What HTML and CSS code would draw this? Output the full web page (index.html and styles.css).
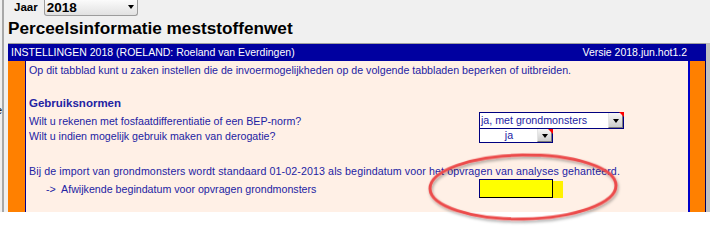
FILE: index.html
```html
<!DOCTYPE html>
<html lang="nl">
<head>
<meta charset="utf-8">
<title>Perceelsinformatie meststoffenwet</title>
<link rel="stylesheet" href="styles.css">
</head>
<body>
<div class="window">
  <div class="gutter"><span class="clip-e">e</span></div>
  <div class="main">
    <div class="toolbar">
      <div class="year-row">
        <span class="year-label">Jaar</span>
        <div class="year-select"><span class="year-value">2018</span><span class="caret"></span></div>
      </div>
      <h1 class="title">Perceelsinformatie meststoffenwet</h1>
    </div>
    <div class="frame">
      <div class="panel">
        <div class="panel-head">
          <span>INSTELLINGEN 2018 (ROELAND: Roeland van Everdingen)</span>
          <span>Versie 2018.jun.hot1.2</span>
        </div>
        <div class="panel-body">
          <div class="stripe-left"></div>
          <div class="sheet">
            <div class="cell span">Op dit tabblad kunt u zaken instellen die de invoermogelijkheden op de volgende tabbladen beperken of uitbreiden.</div>
            <div class="cell span"></div>
            <div class="cell span heading">Gebruiksnormen</div>
            <div class="cell">Wilt u rekenen met fosfaatdifferentiatie of een BEP-norm?</div>
            <div class="cell ctl">
              <div class="dropdown dd-wide"><span class="dd-value">ja, met grondmonsters</span><span class="dd-btn"></span><span class="note-mark"></span></div>
            </div>
            <div class="cell">Wilt u indien mogelijk gebruik maken van derogatie?</div>
            <div class="cell ctl">
              <div class="dropdown dd-narrow"><span class="dd-value">ja</span><span class="dd-btn"></span><span class="note-mark"></span></div>
            </div>
            <div class="cell span"></div>
            <div class="cell span wide-text">Bij de import van grondmonsters wordt standaard 01-02-2013 als begindatum voor het opvragen van analyses gehanteerd.</div>
            <div class="cell indent">->  Afwijkende begindatum voor opvragen grondmonsters</div>
            <div class="cell ctl ctl-field">
              <div class="field-ghost"></div>
              <div class="field"></div>
            </div>
            <div class="cell span"></div>
          </div>
          <div class="stripe-right"></div>
        </div>
      </div>
      <div class="scrollbar"></div>
    </div>
  </div>
</div>
<svg class="annotation" width="210" height="80" viewBox="0 0 210 80">
  <defs>
    <filter id="sh" x="-10%" y="-30%" width="120%" height="160%">
      <feDropShadow dx="1" dy="2" stdDeviation="1.6" flood-color="#000" flood-opacity="0.35"/>
    </filter>
  </defs>
  <ellipse cx="103" cy="42" rx="93" ry="32" fill="none" stroke="#ec4b4b" stroke-width="3" filter="url(#sh)" transform="rotate(-1 103 42)"/>
</svg>
</body>
</html>
```

FILE: styles.css
```css
body {
  margin: 0;
  background: #ffffff;
  font-family: "Liberation Sans", Arial, sans-serif;
}

.window {
  display: flex;
  width: 710px;
  height: 212px;
  background: #f0f0f0;
}

.gutter {
  width: 8px;
  flex: none;
  overflow: hidden;
  background: linear-gradient(to right, transparent 2px, #a8a8a8 2px, #a8a8a8 4px, transparent 4px);
}

.clip-e {
  display: block;
  margin: 104px 0 0 -4px;
  font-size: 11px;
  line-height: 12px;
  color: #000;
}

.main {
  width: 702px;
  display: flex;
  flex-direction: column;
}

.toolbar {
  height: 43px;
  flex: none;
}

.year-row {
  display: flex;
  align-items: flex-start;
  gap: 6px;
  padding-left: 6px;
  height: 16px;
}

.year-label {
  font-weight: bold;
  font-size: 11.5px;
  line-height: 14px;
  color: #000;
}

.year-select {
  width: 94px;
  height: 16px;
  box-sizing: border-box;
  border: 1px solid #9c9c9c;
  border-top: none;
  border-radius: 0 0 3px 3px;
  background: linear-gradient(#fbfbfb, #e1e1e1);
  display: flex;
  align-items: flex-start;
  padding-left: 2px;
}

.year-value {
  font-weight: bold;
  font-size: 13.5px;
  line-height: 15px;
  color: #000;
}

.caret {
  margin: 5px 3px 0 auto;
  width: 0;
  height: 0;
  border-left: 3.5px solid transparent;
  border-right: 3.5px solid transparent;
  border-top: 4px solid #000;
}

.title {
  margin: 0 0 3px;
  height: 24px;
  font-size: 17.2px;
  font-weight: bold;
  line-height: 24px;
  color: #000;
  white-space: nowrap;
}

.frame {
  display: flex;
  flex: 1;
}

.panel {
  width: 698px;
  display: flex;
  flex-direction: column;
}

.panel-head {
  height: 17px;
  border-top: 1px solid #a0a0a0;
  background: #0000a0;
  color: #ffffff;
  font-size: 10.5px;
  line-height: 17px;
  display: flex;
  justify-content: space-between;
  padding: 0 19px 0 3px;
  white-space: nowrap;
}

.panel-body {
  flex: 1;
  display: flex;
}

.stripe-left {
  width: 17px;
  background: #ff8000;
  border-right: 1px solid #000090;
}

.stripe-right {
  width: 15px;
  background: #ff8000;
  border-left: 2px solid #0000c8;
  border-right: 1px solid #000060;
}

.scrollbar {
  width: 4px;
  background: #c0c0c0;
}

.sheet {
  width: 662px;
  background: #fff0e6;
  display: grid;
  grid-template-columns: 453px 1fr;
  grid-template-rows: 17px 16px 18px 17px 14px 20px 16px 19px 1fr;
  color: #2323a3;
  font-size: 10.67px;
}

.cell {
  display: flex;
  align-items: center;
  padding-left: 3px;
  white-space: nowrap;
  min-width: 0;
}

.span {
  grid-column: 1 / -1;
}

.wide-text {
  letter-spacing: 0.1px;
}

.heading {
  font-weight: bold;
  font-size: 11.5px;
}

.indent {
  padding-left: 20px;
  white-space: pre;
}

.ctl {
  align-items: flex-start;
  padding-left: 0;
}

.dropdown {
  position: relative;
  display: flex;
  box-sizing: border-box;
  border: 1px solid #000080;
  background: #ffffff;
}

.dd-wide {
  width: 145px;
  height: 17px;
}

.dd-narrow {
  width: 74px;
  height: 14px;
  border-top: none;
}

.dd-value {
  flex: 1;
  padding-left: 1px;
  line-height: 15px;
  color: #2323a3;
}

.dd-narrow .dd-value {
  text-align: center;
  line-height: 13px;
}

.dd-btn {
  width: 15px;
  height: 100%;
  box-sizing: border-box;
  background: linear-gradient(#f7f7f7, #cdcdcd);
  border-left: 1px solid #e4e4e4;
  border-right: 1px solid #7c7c7c;
  border-bottom: 1px solid #7c7c7c;
  display: flex;
  align-items: center;
  justify-content: center;
}

.dd-btn::after {
  content: "";
  width: 0;
  height: 0;
  border-left: 3.5px solid transparent;
  border-right: 3.5px solid transparent;
  border-top: 4px solid #000;
  margin-top: 2px;
}

.note-mark {
  position: absolute;
  top: -1px;
  right: -1px;
  width: 0;
  height: 0;
  border-top: 5px solid #ff0000;
  border-left: 5px solid transparent;
}

.dd-narrow .note-mark {
  top: 0;
}

.ctl-field {
  position: relative;
}

.field-ghost {
  position: absolute;
  left: 40px;
  top: 2px;
  width: 44px;
  height: 17px;
  background: #fff200;
}

.field {
  position: relative;
  width: 74px;
  height: 19px;
  box-sizing: border-box;
  border: 1px solid;
  border-color: #000080 #000000 #000000 #000080;
  background: #ffff00;
}

.annotation {
  position: absolute;
  left: 420px;
  top: 145px;
  overflow: visible;
  pointer-events: none;
}
```
